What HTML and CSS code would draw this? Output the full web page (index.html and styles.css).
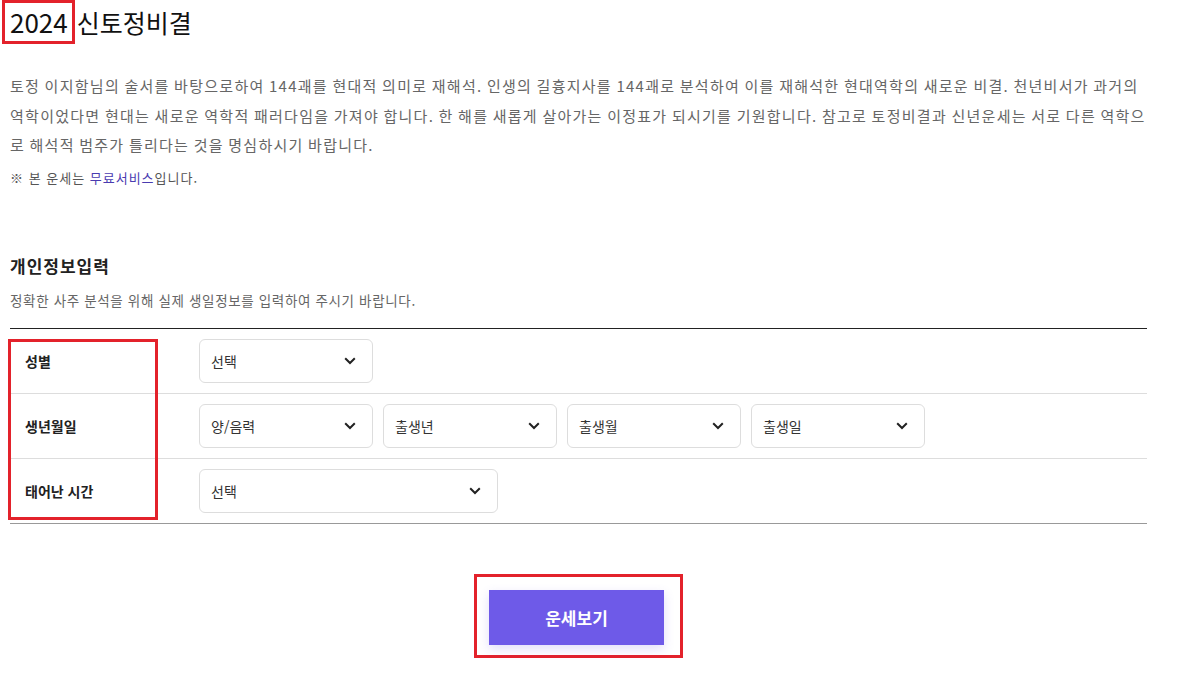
FILE: index.html
```html
<!DOCTYPE html>
<html lang="ko">
<head>
<meta charset="utf-8">
<title>2024 신토정비결</title>
<link rel="stylesheet" href="styles.css">
</head>
<body>
<div class="page">
  <h1 class="title"><span class="mark">2024</span> 신토정비결</h1>
  <p class="desc">토정 이지함님의 술서를 바탕으로하여 144괘를 현대적 의미로 재해석. 인생의 길흉지사를 144괘로 분석하여 이를 재해석한 현대역학의 새로운 비결. 천년비서가 과거의 역학이었다면 현대는 새로운 역학적 패러다임을 가져야 합니다. 한 해를 새롭게 살아가는 이정표가 되시기를 기원합니다. 참고로 토정비결과 신년운세는 서로 다른 역학으로 해석적 범주가 틀리다는 것을 명심하시기 바랍니다.</p>
  <p class="note">※ 본 운세는 <a class="free">무료서비스</a>입니다.</p>

  <section class="form">
    <h2 class="form-title">개인정보입력</h2>
    <p class="form-sub">정확한 사주 분석을 위해 실제 생일정보를 입력하여 주시기 바랍니다.</p>
    <div class="table">
      <div class="row">
        <div class="label">성별</div>
        <div class="fields">
          <div class="select"><span>선택</span><svg class="chev" viewBox="0 0 12 8" width="12" height="8"><path d="M1.2 1.3 6 6 10.8 1.3" fill="none" stroke="#222" stroke-width="2"/></svg></div>
        </div>
      </div>
      <div class="row">
        <div class="label">생년월일</div>
        <div class="fields">
          <div class="select"><span>양/음력</span><svg class="chev" viewBox="0 0 12 8" width="12" height="8"><path d="M1.2 1.3 6 6 10.8 1.3" fill="none" stroke="#222" stroke-width="2"/></svg></div>
          <div class="select"><span>출생년</span><svg class="chev" viewBox="0 0 12 8" width="12" height="8"><path d="M1.2 1.3 6 6 10.8 1.3" fill="none" stroke="#222" stroke-width="2"/></svg></div>
          <div class="select"><span>출생월</span><svg class="chev" viewBox="0 0 12 8" width="12" height="8"><path d="M1.2 1.3 6 6 10.8 1.3" fill="none" stroke="#222" stroke-width="2"/></svg></div>
          <div class="select"><span>출생일</span><svg class="chev" viewBox="0 0 12 8" width="12" height="8"><path d="M1.2 1.3 6 6 10.8 1.3" fill="none" stroke="#222" stroke-width="2"/></svg></div>
        </div>
      </div>
      <div class="row last">
        <div class="label">태어난 시간</div>
        <div class="fields">
          <div class="select wide"><span>선택</span><svg class="chev" viewBox="0 0 12 8" width="12" height="8"><path d="M1.2 1.3 6 6 10.8 1.3" fill="none" stroke="#222" stroke-width="2"/></svg></div>
        </div>
      </div>
      <div class="label-mark"></div>
    </div>
    <div class="actions">
      <div class="btn-mark"><button class="btn" type="button">운세보기</button></div>
    </div>
  </section>
</div>
</body>
</html>
```
FILE: styles.css
```css
* { box-sizing: border-box; }
html, body { margin: 0; padding: 0; background: #fff; }
body {
  font-family: "Noto Sans CJK KR", "Noto Sans", sans-serif;
  color: #222;
}
.page {
  width: 1147px;
  padding-left: 10px;
}
.title {
  margin: 0 0 0 -8px;
  height: 44px;
  font-size: 25px;
  font-weight: 400;
  line-height: 44px;
  color: #111;
  display: flex;
  align-items: center;
}
.mark {
  display: inline-block;
  height: 44px;
  line-height: 38px;
  padding: 0 4px 0 5px;
  border: 3px solid #e3222b;
  margin-right: 2px;
  font-size: 26px;
}
.desc {
  margin: 27px 0 0;
  font-size: 15px;
  line-height: 29.5px;
  color: #666;
  letter-spacing: 1.27px;
  word-spacing: -1px;
}
.note {
  margin: 8px 0 0;
  font-size: 13px;
  line-height: 20px;
  color: #555;
  letter-spacing: 1px;
}
.free { color: #4a3bb0; text-decoration: none; }
.form-title {
  margin: 66px 0 0;
  font-size: 17px;
  font-weight: 700;
  line-height: 24px;
  color: #222;
  letter-spacing: 1px;
}
.form-sub {
  margin: 12px 0 0;
  font-size: 13.5px;
  line-height: 20px;
  color: #666;
  letter-spacing: 0.65px;
}
.table {
  position: relative;
  margin-top: 18px;
  border-top: 1px solid #222;
}
.row {
  display: flex;
  align-items: center;
  padding: 10px 0;
  border-bottom: 1px solid #ddd;
}
.row.last { border-bottom-color: #999; }
.label {
  width: 189px;
  padding-left: 15px;
  font-size: 14px;
  font-weight: 700;
  color: #222;
}
.fields {
  display: flex;
  gap: 10px;
}
.select {
  width: 174px;
  height: 44px;
  border: 1px solid #ddd;
  border-radius: 6px;
  display: flex;
  align-items: center;
  justify-content: space-between;
  padding: 0 16px 0 11px;
  font-size: 14px;
  color: #333;
  background: #fff;
}
.select.wide { width: 299px; }
.chev { display: block; }
.label-mark {
  position: absolute;
  left: -2px;
  top: 10px;
  width: 150px;
  height: 181px;
  border: 3px solid #e3222b;
  pointer-events: none;
}
.actions {
  display: flex;
  justify-content: center;
  margin-top: 50px;
}
.btn-mark {
  border: 3px solid #e3222b;
  padding: 13px 16px 10px 12px;
}
.btn {
  display: block;
  width: 175px;
  height: 55px;
  border: 0;
  background: #6e5ae8;
  color: #fff;
  font-family: "Noto Sans CJK KR", "Noto Sans", sans-serif;
  font-size: 17px;
  font-weight: 700;
  box-shadow: 0 4px 10px rgba(110, 90, 232, 0.2);
  cursor: pointer;
}
```
